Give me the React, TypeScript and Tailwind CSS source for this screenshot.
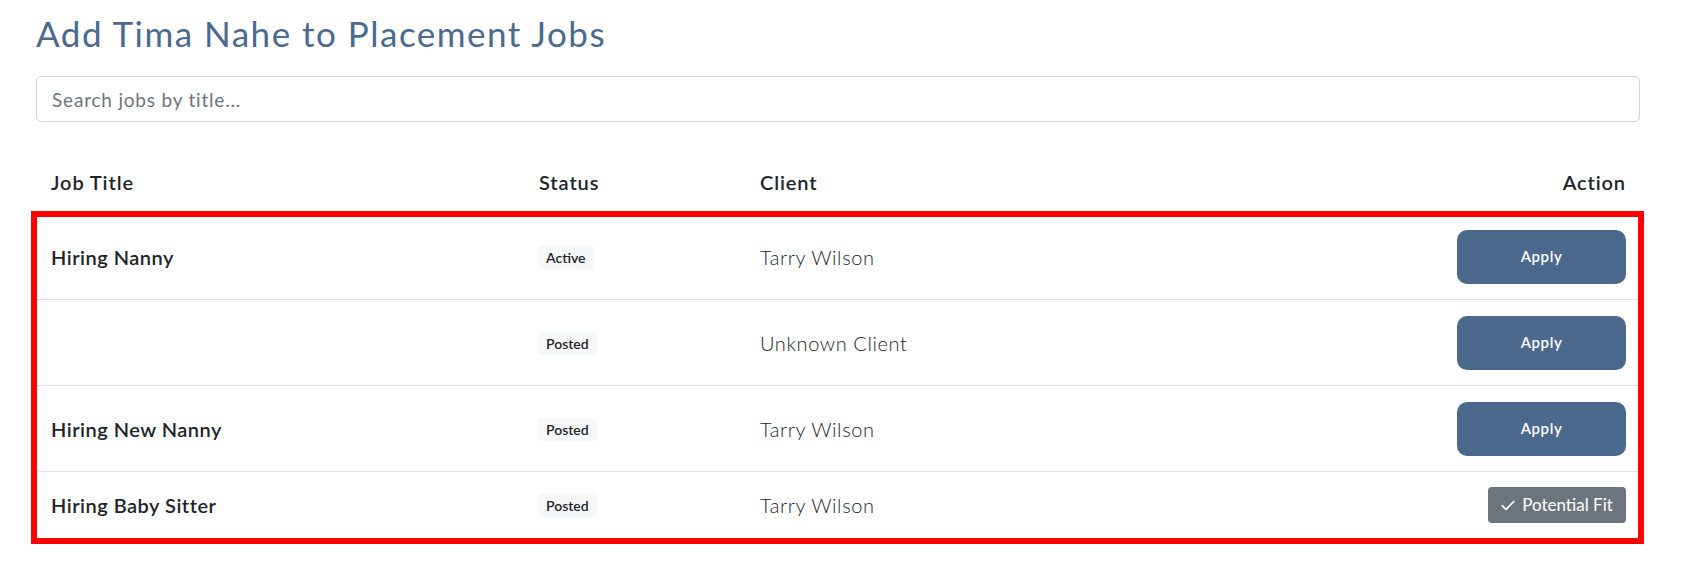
import React from 'react';

type Job = {
  title: string;
  status: string;
  client: string;
  applied: boolean;
};

const jobs: Job[] = [
  { title: 'Hiring Nanny', status: 'Active', client: 'Tarry Wilson', applied: false },
  { title: '', status: 'Posted', client: 'Unknown Client', applied: false },
  { title: 'Hiring New Nanny', status: 'Posted', client: 'Tarry Wilson', applied: false },
  { title: 'Hiring Baby Sitter', status: 'Posted', client: 'Tarry Wilson', applied: true },
];

const CheckMark = () => (
  <svg width="14" height="11" viewBox="0 0 14 11" fill="none" className="mr-[7px]">
    <polyline points="1.2,5.6 5,9.3 12.8,1.5" stroke="white" strokeWidth="1.7" strokeLinecap="round" strokeLinejoin="round" />
  </svg>
);

const App: React.FC = () => {
  return (
    <div className="min-h-screen bg-white font-[family-name:Lato,'Noto_Sans',sans-serif] text-[#212529]">
      <div className="pl-[36px] pr-[43px] pt-[13px]">
        <h2 className="text-[35px] leading-[40px] font-normal tracking-[1.5px] text-[#4a6a8e] mb-[23px]">
          Add Tima Nahe to Placement Jobs
        </h2>

        <input
          type="text"
          placeholder="Search jobs by title..."
          className="block w-full h-[46px] border border-[#ced4da] rounded-[5px] px-[15px] text-[19px] tracking-[0.8px] text-[#495057] placeholder:text-[#6c757d] outline-none"
        />

        <div className="mt-[34px]">
          {/* header */}
          <div className="grid grid-cols-[488px_221px_1fr_220px] h-[58px] items-center pb-[6px] text-[20px] tracking-[0.9px] font-semibold">
            <div className="px-[15px]">Job Title</div>
            <div className="px-[15px]">Status</div>
            <div className="px-[15px]">Client</div>
            <div className="pr-[14px] text-right">Action</div>
          </div>

          {/* rows */}
          <div className="relative">
            {jobs.map((job, index) => (
              <div
                key={index}
                className={
                  'grid grid-cols-[488px_221px_1fr_220px] items-center ' +
                  (index < jobs.length - 1 ? 'h-[86px] border-b border-[#dee2e6]' : 'h-[66px]')
                }
              >
                <div className="px-[15px] text-[20px] tracking-[0.5px] font-semibold">{job.title}</div>
                <div className="pl-[14px]">
                  <span className="inline-block rounded-[4px] bg-[#f6f7f9] px-[8px] py-[3px] text-[14px] leading-[17px] font-semibold">
                    {job.status}
                  </span>
                </div>
                <div className="px-[15px] text-[20px] tracking-[0.6px] font-light text-[#212529]">{job.client}</div>
                <div className="flex justify-end pr-[14px]">
                  {job.applied ? (
                    <span className="flex items-center h-[36px] w-[138px] justify-center rounded-[4px] bg-[#6c757d] text-white text-[17px]">
                      <CheckMark />
                      Potential Fit
                    </span>
                  ) : (
                    <button className="h-[54px] w-[169px] rounded-[10px] bg-[#4a698c] text-white text-[15px] tracking-[0.6px] font-semibold">
                      Apply
                    </button>
                  )}
                </div>
              </div>
            ))}
            <div className="pointer-events-none absolute -left-[5px] -right-[4px] -top-[3px] -bottom-[6px] border-[6px] border-[#ff0000]" />
          </div>
        </div>
      </div>
    </div>
  );
};

export default App;
